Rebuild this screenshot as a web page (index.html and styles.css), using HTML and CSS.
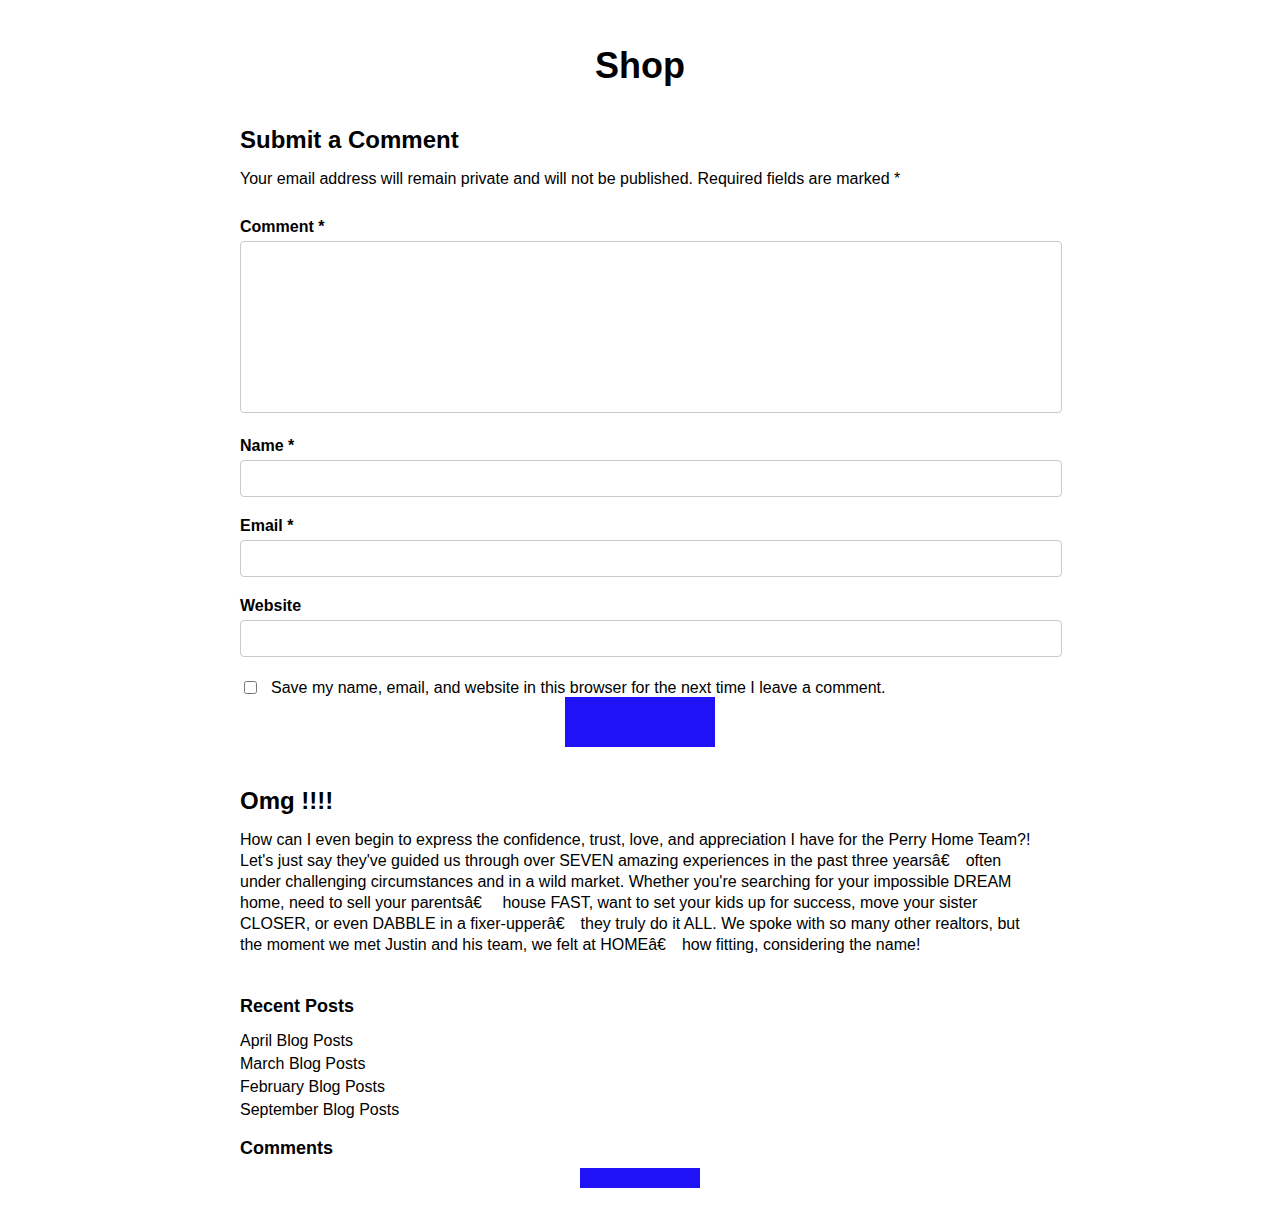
FILE: index.html
```html
<!DOCTYPE html>
<html lang="en">
<head>
<meta charset="utf-8">
<title>Shop</title>
<link rel="stylesheet" href="styles.css">
</head>
<body>
<main class="page">
  <h1 class="title">Shop</h1>
  <section class="respond">
    <h2 class="respond-title">Submit a Comment</h2>
    <p class="notes">Your email address will remain private and will not be published. Required fields are marked *</p>
    <form class="form">
      <div class="field">
        <label class="label">Comment *</label>
        <textarea class="textarea"></textarea>
      </div>
      <div class="field">
        <label class="label">Name *</label>
        <input class="input" type="text">
      </div>
      <div class="field">
        <label class="label">Email *</label>
        <input class="input" type="text">
      </div>
      <div class="field">
        <label class="label">Website</label>
        <input class="input" type="text">
      </div>
      <div class="consent">
        <input class="check" type="checkbox">
        <span class="consent-text">Save my name, email, and website in this browser for the next time I leave a comment.</span>
      </div>
      <div class="submit-row"><span class="submit"></span></div>
    </form>
  </section>
  <section class="testimonial">
    <h2 class="t-title">Omg !!!!</h2>
    <p class="t-text">How can I even begin to express the confidence, trust, love, and appreciation I have for the Perry Home Team?! Let's just say they've guided us through over SEVEN amazing experiences in the past three yearsâ€&emsp;often under challenging circumstances and in a wild market. Whether you're searching for your impossible DREAM home, need to sell your parentsâ€&emsp; house FAST, want to set your kids up for success, move your sister CLOSER, or even DABBLE in a fixer-upperâ€&emsp;they truly do it ALL. We spoke with so many other realtors, but the moment we met Justin and his team, we felt at HOMEâ€&emsp;how fitting, considering the name!</p>
  </section>
  <aside class="widgets">
    <h3 class="w-title">Recent Posts</h3>
    <ul class="posts">
      <li>April Blog Posts</li>
      <li>March Blog Posts</li>
      <li>February Blog Posts</li>
      <li>September Blog Posts</li>
    </ul>
    <h3 class="w-title w-comments">Comments</h3>
    <div class="bar-row"><span class="bar"></span></div>
  </aside>
</main>
</body>
</html>
```

FILE: styles.css
```css
* { box-sizing: border-box; }
html, body { margin: 0; padding: 0; background: #fff; }
body {
  font-family: "Liberation Sans", Arial, sans-serif;
  color: #000;
  font-size: 16px;
}
.page {
  width: 800px;
  margin: 0 auto;
  padding-top: 44px;
}
.title {
  margin: 0;
  text-align: center;
  font-size: 36px;
  line-height: 44px;
  font-weight: bold;
}
.respond { margin-top: 37px; }
.respond-title {
  margin: 0;
  font-size: 24px;
  line-height: 30px;
  font-weight: bold;
}
.notes {
  margin: 14px 0 0;
  line-height: 20px;
}
.form { margin-top: 28px; }
.field { display: flex; flex-direction: column; margin-bottom: 19px; }
.label {
  font-weight: bold;
  line-height: 20px;
  margin-bottom: 4px;
}
.textarea {
  display: block;
  width: 822px;
  height: 172px;
  border: 1px solid #c9c9c9;
  border-radius: 4px;
  resize: none;
  margin: 0 0 4px;
}
.input {
  display: block;
  width: 822px;
  height: 37px;
  border: 1px solid #c9c9c9;
  border-radius: 4px;
  margin: 0;
}
.field:last-of-type { margin-bottom: 0; }
.consent {
  display: flex;
  align-items: center;
  margin-top: 21px;
  line-height: 20px;
}
.check {
  width: 13px;
  height: 13px;
  margin: 0 14px 0 4px;
  position: relative;
  top: -1px;
}
.submit-row { display: flex; justify-content: center; margin-top: -1px; }
.submit {
  display: block;
  width: 150px;
  height: 50px;
  background: #1f12f6;
}
.testimonial { margin-top: 39px; }
.t-title {
  margin: 0;
  font-size: 24px;
  line-height: 30px;
  font-weight: bold;
}
.t-text {
  margin: 13px 0 0;
  width: 800px;
  line-height: 21px;
}
.widgets { margin-top: 40px; }
.w-title {
  margin: 0;
  font-size: 18px;
  line-height: 22px;
  font-weight: bold;
}
.posts {
  list-style: none;
  margin: 12px 0 0;
  padding: 0;
}
.posts li { line-height: 23px; }
.w-comments { margin-top: 16px; }
.bar-row { display: flex; justify-content: center; margin-top: 9px; }
.bar {
  display: block;
  width: 120px;
  height: 20px;
  background: #1f12f6;
}
```
